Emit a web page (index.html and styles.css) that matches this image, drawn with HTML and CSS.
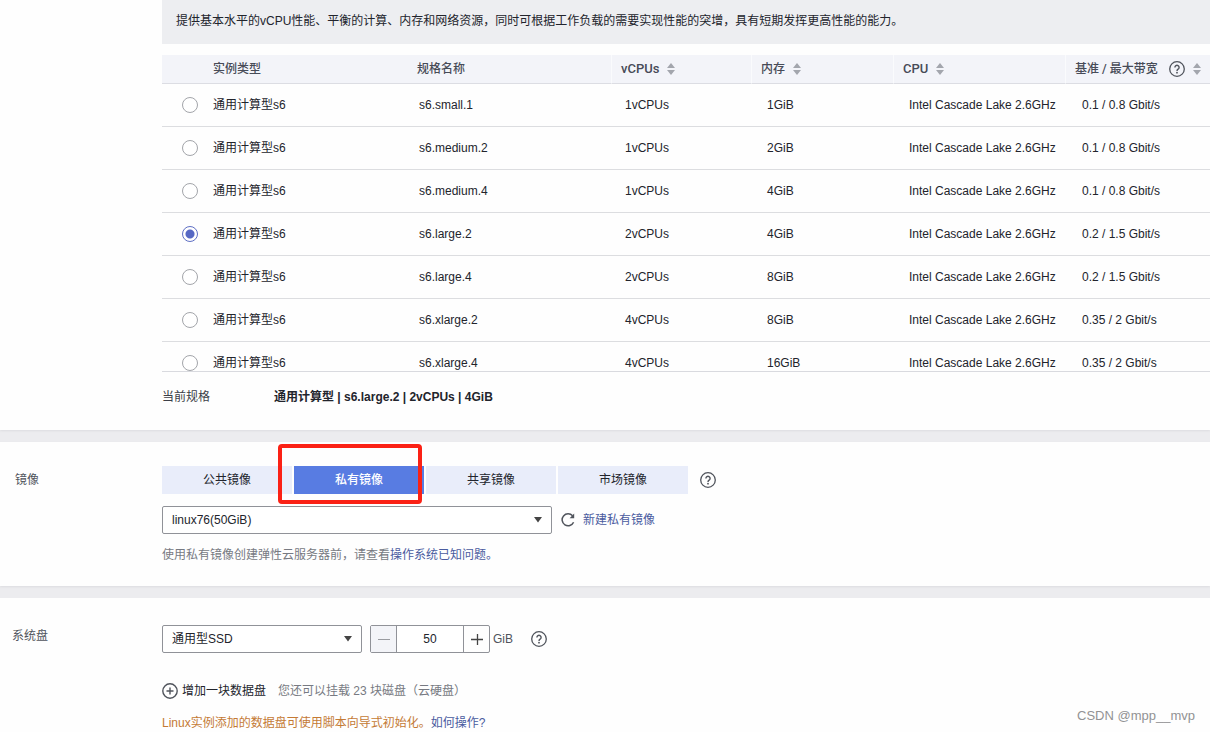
FILE: index.html
```
<!DOCTYPE html>
<html lang="zh-CN">
<head>
<meta charset="utf-8">
<title>购买弹性云服务器</title>
<link rel="stylesheet" href="styles.css">
</head>
<body>
<svg class="defs" aria-hidden="true">
  <symbol id="sort" viewBox="0 0 8 12"><path d="M4 0l4 5H0zM4 12l4-5H0z" fill="#a3a6ad"/></symbol>
  <symbol id="help" viewBox="0 0 16 16"><circle cx="8" cy="8" r="7.3" fill="none" stroke="#50545c" stroke-width="1.3"/><path d="M5.9 6.4a2.1 2.1 0 1 1 3.2 1.8C8.3 8.7 8 9 8 9.9" fill="none" stroke="#50545c" stroke-width="1.4"/><circle cx="8" cy="11.7" r=".9" fill="#50545c"/></symbol>
  <symbol id="caret" viewBox="0 0 8 6"><path d="M0 0h8L4 5.6z" fill="#444"/></symbol>
</svg>
<main class="page">
  <section class="panel flavor">
    <div class="content">
      <p class="notice">提供基本水平的vCPU性能、平衡的计算、内存和网络资源，同时可根据工作负载的需要实现性能的突增，具有短期发挥更高性能的能力。</p>
      <div class="table-view">
        <table class="specs">
          <colgroup><col class="c-pick"><col class="c-type"><col class="c-name"><col class="c-vcpu"><col class="c-mem"><col class="c-cpu"><col></colgroup>
          <thead>
            <tr>
              <th></th><th class="first">实例类型</th><th>规格名称</th>
              <th class="split latin"><span class="head">vCPUs <svg class="sort"><use href="#sort"/></svg></span></th>
              <th class="split"><span class="head">内存 <svg class="sort"><use href="#sort"/></svg></span></th>
              <th class="split latin"><span class="head">CPU <svg class="sort"><use href="#sort"/></svg></span></th>
              <th class="split"><span class="head wide">基准 / 最大带宽 <svg class="help"><use href="#help"/></svg><svg class="sort"><use href="#sort"/></svg></span></th>
            </tr>
          </thead>
          <tbody>
            <tr><td><input type="radio" name="spec" aria-label="s6.small.1"></td><td class="first">通用计算型s6</td><td class="name">s6.small.1</td><td>1vCPUs</td><td class="mem">1GiB</td><td class="mem">Intel Cascade Lake 2.6GHz</td><td class="band">0.1 / 0.8 Gbit/s</td></tr>
            <tr><td><input type="radio" name="spec" aria-label="s6.medium.2"></td><td class="first">通用计算型s6</td><td class="name">s6.medium.2</td><td>1vCPUs</td><td class="mem">2GiB</td><td class="mem">Intel Cascade Lake 2.6GHz</td><td class="band">0.1 / 0.8 Gbit/s</td></tr>
            <tr><td><input type="radio" name="spec" aria-label="s6.medium.4"></td><td class="first">通用计算型s6</td><td class="name">s6.medium.4</td><td>1vCPUs</td><td class="mem">4GiB</td><td class="mem">Intel Cascade Lake 2.6GHz</td><td class="band">0.1 / 0.8 Gbit/s</td></tr>
            <tr><td><input type="radio" name="spec" aria-label="s6.large.2" checked></td><td class="first">通用计算型s6</td><td class="name">s6.large.2</td><td>2vCPUs</td><td class="mem">4GiB</td><td class="mem">Intel Cascade Lake 2.6GHz</td><td class="band">0.2 / 1.5 Gbit/s</td></tr>
            <tr><td><input type="radio" name="spec" aria-label="s6.large.4"></td><td class="first">通用计算型s6</td><td class="name">s6.large.4</td><td>2vCPUs</td><td class="mem">8GiB</td><td class="mem">Intel Cascade Lake 2.6GHz</td><td class="band">0.2 / 1.5 Gbit/s</td></tr>
            <tr><td><input type="radio" name="spec" aria-label="s6.xlarge.2"></td><td class="first">通用计算型s6</td><td class="name">s6.xlarge.2</td><td>4vCPUs</td><td class="mem">8GiB</td><td class="mem">Intel Cascade Lake 2.6GHz</td><td class="band">0.35 / 2 Gbit/s</td></tr>
            <tr><td><input type="radio" name="spec" aria-label="s6.xlarge.4"></td><td class="first">通用计算型s6</td><td class="name">s6.xlarge.4</td><td>4vCPUs</td><td class="mem">16GiB</td><td class="mem">Intel Cascade Lake 2.6GHz</td><td class="band">0.35 / 2 Gbit/s</td></tr>
          </tbody>
        </table>
      </div>
      <div class="current"><span class="current-label">当前规格</span><strong>通用计算型 | s6.large.2 | 2vCPUs | 4GiB</strong></div>
    </div>
  </section>

  <section class="panel image">
    <h2 class="title">镜像</h2>
    <div class="content">
      <div class="tab-row">
        <div class="tabs">
          <button type="button" class="tab">公共镜像</button>
          <button type="button" class="tab active">私有镜像</button>
          <button type="button" class="tab">共享镜像</button>
          <button type="button" class="tab">市场镜像</button>
        </div>
        <svg class="help"><use href="#help"/></svg>
      </div>
      <div class="pick-row">
        <span class="select-box image-box"><select aria-label="镜像"><option>linux76(50GiB)</option></select><svg class="caret"><use href="#caret"/></svg></span>
        <button type="button" class="refresh" aria-label="刷新"><svg class="refresh-icon" viewBox="0 0 14 14"><path d="M12.6 9.3A6 6 0 1 1 11.6 2.8" fill="none" stroke="#50545c" stroke-width="1.5"/><path d="M13.2.6v4.6H8.6z" fill="#50545c"/></svg></button>
        <a href="#">新建私有镜像</a>
      </div>
      <p class="hint">使用私有镜像创建弹性云服务器前，请查看<a href="#">操作系统已知问题。</a></p>
    </div>
  </section>

  <section class="panel disk">
    <h2 class="title">系统盘</h2>
    <div class="content">
      <div class="disk-row">
        <span class="select-box disk-box"><select aria-label="系统盘"><option>通用型SSD</option></select><svg class="caret"><use href="#caret"/></svg></span>
        <div class="stepper">
          <button type="button" class="step off" aria-label="减少"><svg class="sign" viewBox="0 0 12 12"><path d="M0 6.5h12" stroke="#999ba0"/></svg></button>
          <input type="text" value="50" aria-label="容量 GiB">
          <button type="button" class="step" aria-label="增加"><svg class="sign" viewBox="0 0 12 12"><path d="M0 6.5h12M6.5 1v11" stroke="#444" stroke-width="1.3"/></svg></button>
        </div>
        <span class="unit">GiB</span>
        <svg class="help"><use href="#help"/></svg>
      </div>
      <div class="add-row">
        <button type="button" class="add"><svg class="plus" viewBox="0 0 16 16"><g fill="none" stroke="#50545c" stroke-width="1.4"><circle cx="8" cy="8" r="7.2"/><path d="M4.5 8h7M8 4.5v7"/></g></svg>增加一块数据盘</button>
        <span class="left">您还可以挂载 23 块磁盘（云硬盘）</span>
      </div>
      <p class="warn">Linux实例添加的数据盘可使用脚本向导式初始化。<a href="#">如何操作?</a></p>
    </div>
  </section>
  <div class="mark">CSDN @mpp__mvp</div>
</main>
</body>
</html>
```
FILE: styles.css
```
*, *::after { box-sizing: border-box; }
body {
  margin: 0;
  background: #ececef;
  color: #22242c;
  font: 12px/20px "Liberation Sans", "Noto Sans CJK SC", sans-serif;
}
button, input, select { font: inherit; color: inherit; }
button { padding: 0; border: 0; background: none; }
p, h2 { margin: 0; }
a { color: #4a5b9f; text-decoration: none; }
svg { display: block; flex: none; }
.defs { position: absolute; width: 0; height: 0; }
.page {
  position: relative;
  display: flex;
  flex-direction: column;
  gap: 12px;
  min-height: 100vh;
  overflow: hidden;
}
.panel {
  display: grid;
  grid-template-columns: 162px minmax(0, 1fr);
  background: #fefefe;
}
.content { grid-column: 2; }
.title { font-size: 12px; font-weight: 400; color: #50545c; }

.flavor { padding-bottom: 23px; box-shadow: 0 1px 2px #dcdce0; }
.notice { padding: 11px 14px 13px; background: #edeef1; white-space: nowrap; }
.table-view {
  height: 317px;
  margin-top: 11px;
  overflow: hidden;
  border-bottom: 1px solid #d9dadf;
}
.specs { width: 100%; border-collapse: separate; border-spacing: 0; table-layout: fixed; }
.c-pick { width: 51px; }
.c-type { width: 193px; }
.c-name { width: 205px; }
.c-vcpu { width: 140px; }
.c-mem { width: 142px; }
.c-cpu { width: 172px; }
.specs th {
  height: 29px;
  padding: 0 0 0 11px;
  background: #f3f4f9;
  border-bottom: 1px solid #dcdde3;
  color: #474b57;
  font-family: Roboto, "Noto Sans CJK SC", sans-serif;
  font-weight: 500;
  text-align: left;
  white-space: nowrap;
}
.specs .split { padding-left: 9px; border-left: 1px solid #fafbfd; }
.specs .latin { font-size: 13px; }
.specs td {
  height: 43px;
  padding: 0 0 0 14px;
  border-bottom: 1px solid #dcdde0;
  white-space: nowrap;
}
.specs .first { padding-left: 0; }
.specs .name { padding-left: 13px; }
.specs .mem { padding-left: 16px; }
.specs .band { padding-left: 17px; }
.head { display: flex; align-items: center; gap: 8px; }
.wide .help { margin-left: 3px; }
.sort { width: 8px; height: 12px; }
.help { width: 16px; height: 16px; }
.specs input {
  display: block;
  appearance: none;
  width: 16px;
  height: 16px;
  margin: 0 0 0 20px;
  border: 1px solid #a3a5aa;
  border-radius: 50%;
  background: #fff;
}
.specs td:first-child { padding-left: 0; }
.specs input:checked {
  border-color: #5e6fc4;
  background: radial-gradient(circle, #5668c4 0 4px, #fff 5px);
}
.current { display: flex; margin-top: 15px; }
.current-label { width: 112px; color: #3c3f48; }

.image { padding: 24px 0 21px; box-shadow: 0 1px 2px #dcdce0; }
.image .title { padding: 4px 0 0 15px; }
.tab-row { display: flex; align-items: center; gap: 12px; }
.tabs { display: flex; gap: 2px; }
.tab { position: relative; width: 130px; height: 28px; background: #e9edfa; }
.active { background: #587ce2; color: #fff; font-weight: 500; }
.active::after {
  content: "";
  position: absolute;
  z-index: 1;
  left: -16px;
  top: -22px;
  width: 144px;
  height: 60px;
  border: 4px solid #fb2115;
  border-radius: 4px;
}
.pick-row { display: flex; align-items: center; margin-top: 12px; }
.select-box { position: relative; display: block; height: 28px; }
.select-box select {
  appearance: none;
  width: 100%;
  height: 28px;
  padding: 0 28px 0 9px;
  border: 1px solid #909298;
  border-radius: 2px;
  background: #fff;
}
.caret { position: absolute; right: 10px; top: 11px; width: 8px; height: 6px; pointer-events: none; }
.image-box { width: 390px; }
.refresh { margin: 0 8px 0 9px; }
.refresh-icon { width: 14px; height: 14px; }
.hint { margin-top: 11px; color: #777a82; }

.disk { flex: 1; padding-top: 27px; }
.disk .title { padding: 1px 0 0 12px; }
.disk-row { display: flex; align-items: center; }
.disk-box { width: 200px; }
.stepper {
  display: flex;
  width: 120px;
  height: 28px;
  margin: 0 3px 0 8px;
  border: 1px solid #909298;
  border-radius: 2px;
}
.stepper input {
  flex: 1;
  min-width: 0;
  padding: 0;
  border: solid #909298;
  border-width: 0 1px;
  background: #fff;
  text-align: center;
}
.step { display: flex; align-items: center; justify-content: center; width: 25px; }
.off { background: #f3f4f8; }
.sign { width: 12px; height: 12px; }
.unit { width: 38px; color: #50545c; }
.add-row { display: flex; align-items: center; gap: 12px; margin-top: 28px; }
.add { display: flex; align-items: center; gap: 4px; }
.plus { width: 16px; height: 16px; }
.left { color: #777a82; }
.warn { margin-top: 12px; color: #c47a35; }
.mark {
  position: absolute;
  right: 15px;
  bottom: 7px;
  color: #929294;
  font-family: "Liberation Sans", sans-serif;
  font-size: 13px;
}
```
